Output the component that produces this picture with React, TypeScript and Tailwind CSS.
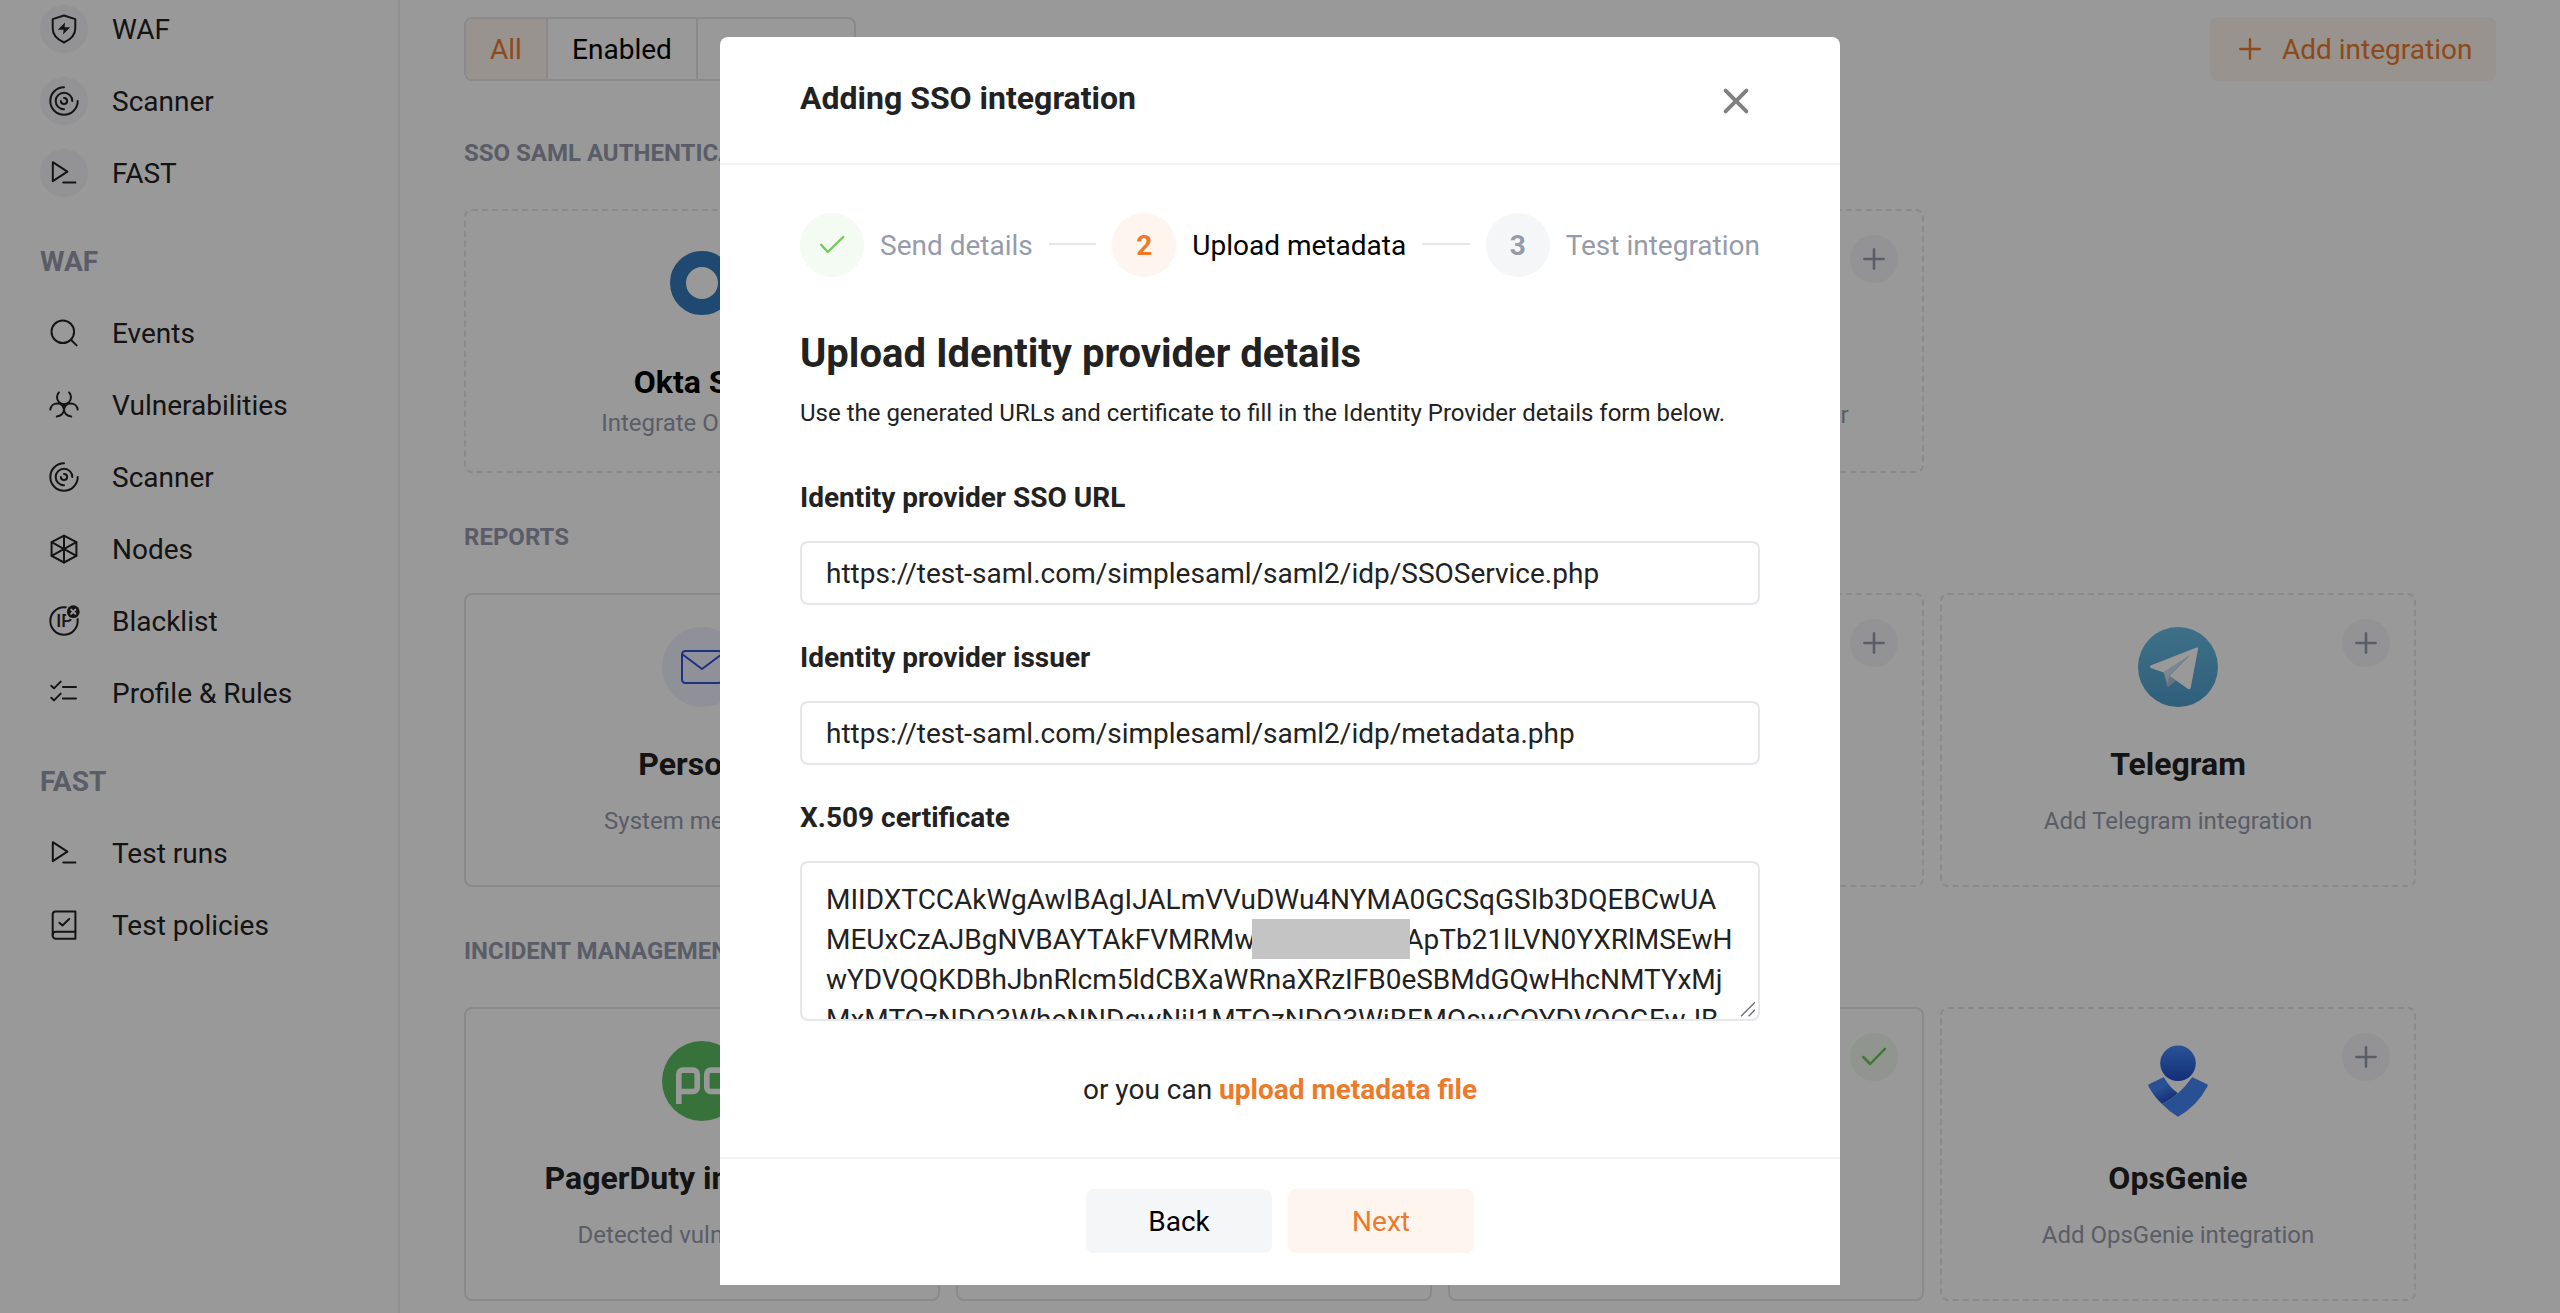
import type { ReactNode } from "react";

type NavIconName = "shield" | "scanner" | "run" | "search" | "bio" | "nodes" | "ip" | "rules" | "policy";

function NavIcon({ name }: { name: NavIconName }) {
  const drawings: Record<NavIconName, ReactNode> = {
    shield: (
      <>
        <path d="M24 10.5 35.3 14.1V23.6C35.3 30.2 30.6 34.6 24 37.5 17.4 34.6 12.7 30.2 12.7 23.6V14.1Z" />
        <path d="M25 17.5 17.8 24.8H23.6L23 29.6 30.2 22.3H24.6Z" fill="currentColor" stroke="none" />
      </>
    ),
    scanner: (
      <>
        <path d="M24 10.3A13.7 13.7 0 1 0 37.7 24" />
        <path d="M24 32.3A8.3 8.3 0 1 1 32.3 24" />
        <path d="M24 20.9A3.1 3.1 0 1 1 20.9 24" />
      </>
    ),
    run: (
      <>
        <path d="M12.8 13.2V32.2L27.4 22.7Z" />
        <path d="M23.3 33.5H35.4" />
      </>
    ),
    search: (
      <>
        <circle cx="22.8" cy="22.8" r="11.3" />
        <path d="M31.2 31 36.6 36.4" />
      </>
    ),
    bio: (
      <>
        <path d="M18.9 11.4A7 7 0 1 0 29.1 11.4" />
        <path d="M10.3 28.6A6.9 6.9 0 0 1 24 28.6C24 32 21 35.4 16.8 35.4" />
        <path d="M37.7 28.6A6.9 6.9 0 0 0 24 28.6C24 32 27 35.4 31.2 35.4" />
        <path d="M22 23.6H26L24 26.8Z" fill="currentColor" />
      </>
    ),
    nodes: (
      <>
        <path d="M24 10.7 36.4 17.2V30.8L24 37.5 11.6 30.8V17.2Z" />
        <path d="M24 10.7V37.5M11.6 17.2 36.4 30.8M36.4 17.2 11.6 30.8" />
      </>
    ),
    ip: (
      <>
        <circle cx="24" cy="24" r="13.7" />
        <text x="16.2" y="30.4" fontSize="17.5" fontWeight="500" fill="currentColor" stroke="none">
          IP
        </text>
        <circle cx="33.3" cy="14.7" r="8" fill="white" stroke="none" />
        <circle cx="33.3" cy="14.7" r="6.4" fill="currentColor" stroke="none" />
        <path d="M31.2 12.6 35.4 16.8M35.4 12.6 31.2 16.8" stroke="white" strokeWidth="2" />
      </>
    ),
    rules: (
      <>
        <path d="M11.3 16.8 14 19.4 20.7 12.6M11.3 28.8 14 31.4 20.7 24.6" />
        <path d="M22.9 18H36M22.9 29.4H36" />
      </>
    ),
    policy: (
      <>
        <path d="M35.4 10.5H15.7A3 3 0 0 0 12.7 13.5V34.7A3 3 0 0 0 15.7 37.7H35.4Z" />
        <path d="M12.7 33.8A3 3 0 0 1 15.7 30.8H35.4" />
        <path d="M19.4 21.7 22.4 24.4 29.2 18" />
      </>
    ),
  };
  return (
    <svg viewBox="0 0 48 48" className="size-12" fill="none" stroke="currentColor" strokeWidth="2" strokeLinecap="round" strokeLinejoin="round">
      {drawings[name]}
    </svg>
  );
}

function NavItem({ icon, label, round }: { icon: NavIconName; label: string; round?: boolean }) {
  return (
    <a className="flex h-12 items-center gap-6">
      <span className={round ? "size-12 rounded-full bg-[#f5f6f8]" : "size-12"}>
        <NavIcon name={icon} />
      </span>
      <span className="pt-0.5 leading-10">{label}</span>
    </a>
  );
}

function NavHeading({ children }: { children: ReactNode }) {
  return <h3 className="mt-[21px] mb-[3px] h-10 font-bold leading-10 text-[#969bac]">{children}</h3>;
}

function Sidebar() {
  return (
    <aside className="flex w-[400px] shrink-0 flex-col gap-6 border-r-2 border-[#f1f1f4] pt-[5px] pl-10 text-[28px] text-[#222]">
      <NavItem icon="shield" label="WAF" round />
      <NavItem icon="scanner" label="Scanner" round />
      <NavItem icon="run" label="FAST" round />
      <NavHeading>WAF</NavHeading>
      <NavItem icon="search" label="Events" />
      <NavItem icon="bio" label="Vulnerabilities" />
      <NavItem icon="scanner" label="Scanner" />
      <NavItem icon="nodes" label="Nodes" />
      <NavItem icon="ip" label="Blacklist" />
      <NavItem icon="rules" label="Profile & Rules" />
      <NavHeading>FAST</NavHeading>
      <NavItem icon="run" label="Test runs" />
      <NavItem icon="policy" label="Test policies" />
    </aside>
  );
}

function Badge({ kind }: { kind: "plus" | "check" }) {
  return kind === "plus" ? (
    <span className="absolute top-6 right-6 size-12 rounded-full bg-[#f5f6f8] text-[#969bac]">
      <svg viewBox="0 0 48 48" className="size-12" fill="none" stroke="currentColor" strokeWidth="2.6" strokeLinecap="round">
        <path d="M24 14.4V33.6M14.4 24H33.6" />
      </svg>
    </span>
  ) : (
    <span className="absolute top-6 right-6 size-12 rounded-full bg-[#f0faee] text-[#6cc756]">
      <svg viewBox="0 0 48 48" className="size-12" fill="none" stroke="currentColor" strokeWidth="2.5" strokeLinecap="round" strokeLinejoin="round">
        <path d="M13.2 24 20.2 31 34.9 15.8" />
      </svg>
    </span>
  );
}

function OktaLogo() {
  return (
    <svg viewBox="0 0 80 80" className="size-20">
      <circle cx="40" cy="40" r="24" fill="none" stroke="#367bbc" strokeWidth="16" />
    </svg>
  );
}

function MailLogo() {
  return (
    <svg viewBox="0 0 80 80" className="size-20">
      <circle cx="40" cy="40" r="40" fill="#eef0fe" />
      <g fill="none" stroke="#3350da" strokeWidth="2" strokeLinejoin="round">
        <rect x="20" y="24" width="40" height="32" rx="3.5" />
        <path d="M20.6 27.5 40 42 59.4 27.5" />
      </g>
    </svg>
  );
}

function PagerDutyLogo() {
  return (
    <svg viewBox="0 0 80 80" className="size-20">
      <circle cx="40" cy="40" r="40" fill="#5dbf61" />
      <g fill="none" stroke="white" strokeWidth="5.6">
        <path d="M16.8 63V33.1a4 4 0 0 1 4-4H31.2a4 4 0 0 1 4 4V46.5a4 4 0 0 1-4 4H16.8" />
        <path d="M63.2 17V46.5a4 4 0 0 1-4 4H48.8a4 4 0 0 1-4-4V33.1a4 4 0 0 1 4-4H63.2" />
      </g>
    </svg>
  );
}

function TelegramLogo() {
  return (
    <svg viewBox="0 0 80 80" className="size-20">
      <defs>
        <linearGradient id="telegram-sky" x1="0" y1="0" x2="0" y2="1">
          <stop offset="0" stopColor="#69bbe3" />
          <stop offset="1" stopColor="#4f9fcd" />
        </linearGradient>
      </defs>
      <circle cx="40" cy="40" r="40" fill="url(#telegram-sky)" />
      <path d="M25.6 45.2 29.2 59.2Q29.8 60.6 31 59.6L38 53.4 31.5 48Z" fill="#afc0d2" />
      <path d="M12.6 38.6 58.6 20.5Q60.4 20.2 60 22.2L52.6 61.2Q51.9 63 50.2 61.9L31.4 48.8 51.6 28.4 25.6 45.4 12.8 40.9Q11 39.6 12.6 38.6Z" fill="white" />
      <path d="M25.6 45.2 51.8 28.6 31.4 48.6 29.8 57Z" fill="#d3dfea" />
    </svg>
  );
}

function OpsGenieLogo() {
  return (
    <svg viewBox="0 0 80 80" className="size-20">
      <defs>
        <linearGradient id="genie-head" x1="0" y1="0" x2="0" y2="1">
          <stop offset="0" stopColor="#478bfb" />
          <stop offset="1" stopColor="#1f4dc6" />
        </linearGradient>
        <linearGradient id="genie-strap" x1="0.25" y1="0.2" x2="0.65" y2="0.9">
          <stop offset="0.3" stopColor="#4486f6" />
          <stop offset="1" stopColor="#2252c8" />
        </linearGradient>
      </defs>
      <circle cx="40" cy="22.3" r="17.8" fill="url(#genie-head)" />
      <path d="M25 36.4 10.9 43.3Q9.8 44 10.4 45.2 16 55.5 24 63 33 58.8 40 52.3 31.8 46.5 26.4 37Q25.8 36 25 36.4Z" fill="url(#genie-strap)" />
      <path d="M55 36.4 69.1 43.3Q70.2 44 69.6 45.2 59 65 40 75.8 30.5 70 24 63 40.8 55 53.6 37 54.2 36 55 36.4Z" fill="#4486f6" />
    </svg>
  );
}

type CardProps = {
  logo?: ReactNode;
  title?: string;
  note?: string;
  badge?: "plus" | "check";
  dashed?: boolean;
};

/* Wide-spaced card used by the reports and incident sections. */
function Card({ logo, title, note, badge, dashed }: CardProps) {
  return (
    <article className={`relative flex h-[294px] flex-col items-center rounded-lg border-2 border-[#e6e6ea] pt-8 ${dashed ? "border-dashed" : ""}`}>
      {logo}
      <h4 className="mt-[37px] text-[32px] font-bold leading-10 whitespace-nowrap text-[#222]">{title}</h4>
      <p className="mt-[21px] text-2xl leading-8 whitespace-nowrap text-[#969bac]">{note}</p>
      {badge && <Badge kind={badge} />}
    </article>
  );
}

/* Shorter card used by the sign-on section. */
function SsoCard({ logo, title, note, badge }: CardProps) {
  return (
    <article className="relative flex h-[264px] flex-col items-center rounded-lg border-2 border-dashed border-[#e6e6ea] pt-8">
      {logo}
      {title && <h4 className="mt-[39px] mb-[5px] text-[32px] font-bold leading-10 text-black">{title}</h4>}
      <p className={`text-2xl leading-8 whitespace-nowrap text-[#969bac] ${title ? "" : "mt-[156px] pl-1.5"}`}>{note}</p>
      {badge && <Badge kind={badge} />}
    </article>
  );
}

function SectionHeading({ children }: { children: ReactNode }) {
  return <h2 className="mb-10 text-2xl font-bold leading-8 text-[#969bac]">{children}</h2>;
}

function Integrations() {
  return (
    <main className="flex grow flex-col pt-[17px] pr-16 pl-16">
      <div className="mb-14 flex h-16 items-center justify-between text-[28px]">
        <div className="flex h-16 w-[392px] divide-x-2 divide-[#e6e6ea] overflow-hidden rounded-lg border-2 border-[#e6e6ea] leading-10">
          <button className="w-[82px] shrink-0 bg-[#fef5ef] pt-0.5 text-[#ed7a2b]">All</button>
          <button className="w-[150px] shrink-0 pt-0.5">Enabled</button>
          <button className="grow pt-0.5">Disabled</button>
        </div>
        <button className="flex h-16 w-[286px] items-center rounded-lg bg-[#fef5ef] pl-7 text-[#ed7a2b]">
          <svg viewBox="0 0 24 24" className="mr-5 size-6" fill="none" stroke="currentColor" strokeWidth="2.4" strokeLinecap="round">
            <path d="M12 2.2V21.8M2.2 12H21.8" />
          </svg>
          <span className="pt-0.5 leading-10">Add integration</span>
        </button>
      </div>
      <div className="flex w-[1952px] flex-col gap-12">
        <section>
          <SectionHeading>SSO SAML AUTHENTICATION</SectionHeading>
          <div className="grid grid-cols-4 gap-4">
            <SsoCard logo={<OktaLogo />} title="Okta SSO" note="Integrate Okta SSO" />
            <SsoCard />
            <SsoCard note="Integrate other SAML provider" badge="plus" />
          </div>
        </section>
        <section>
          <SectionHeading>REPORTS</SectionHeading>
          <div className="grid grid-cols-4 gap-4">
            <Card logo={<MailLogo />} title="Personal" note="System messages" />
            <Card />
            <Card dashed badge="plus" />
            <Card logo={<TelegramLogo />} title="Telegram" note="Add Telegram integration" dashed badge="plus" />
          </div>
        </section>
        <section>
          <SectionHeading>INCIDENT MANAGEMENT</SectionHeading>
          <div className="grid grid-cols-4 gap-4">
            <Card logo={<PagerDutyLogo />} title="PagerDuty integration" note="Detected vulnerabilities" />
            <Card />
            <Card badge="check" />
            <Card logo={<OpsGenieLogo />} title="OpsGenie" note="Add OpsGenie integration" dashed badge="plus" />
          </div>
        </section>
      </div>
    </main>
  );
}

function Stepper() {
  return (
    <ol className="flex h-16 items-center gap-4 text-[28px] leading-10 whitespace-nowrap text-[#969bac]">
      <li className="size-16 shrink-0 rounded-full bg-[#f4fbf3] text-[#71c85c]">
        <svg viewBox="0 0 64 64" className="size-16" fill="none" stroke="currentColor" strokeWidth="2.3" strokeLinecap="round" strokeLinejoin="round">
          <path d="M21.2 31.8 27.8 39 43.2 24" />
        </svg>
      </li>
      <li className="pt-0.5">Send details</li>
      <li className="mb-0.5 h-0.5 grow bg-[#e6e7ea]" />
      <li className="flex size-16 shrink-0 items-center justify-center rounded-full bg-[#fef5ef] pt-0.5 font-bold text-[#ed7a2b]">2</li>
      <li className="pt-0.5 text-black">Upload metadata</li>
      <li className="mb-0.5 h-0.5 grow bg-[#e6e7ea]" />
      <li className="flex size-16 shrink-0 items-center justify-center rounded-full bg-[#f5f6f8] pt-0.5 font-bold">3</li>
      <li className="pt-0.5">Test integration</li>
    </ol>
  );
}

function Field({ label, children }: { label: string; children: ReactNode }) {
  return (
    <div className="flex flex-col gap-[23px]">
      <label className="pt-px font-bold leading-10">{label}</label>
      {children}
    </div>
  );
}

function TextBox({ value }: { value: string }) {
  return <div className="h-16 rounded-lg border-2 border-[#e6e7ea] px-6 pt-[11px] leading-10">{value}</div>;
}

function Modal() {
  return (
    <div className="fixed inset-0 flex items-start justify-center bg-black/40 pt-[37px]">
      <div className="w-[1120px] rounded-t-lg bg-white text-[28px] text-[#222]">
        <header className="flex h-32 items-start justify-between border-b-2 border-[#f2f2f4] pt-[37px] pr-20 pl-20">
          <h1 className="text-[32px] font-bold leading-[48px]">Adding SSO integration</h1>
          <svg viewBox="0 0 48 48" className="mt-[3px] size-12" fill="none" stroke="#808080" strokeWidth="3.9" strokeLinecap="round">
            <path d="M13.6 13.6 34.4 34.4M34.4 13.6 13.6 34.4" />
          </svg>
        </header>
        <div className="px-20 pt-12 pb-[47px]">
          <Stepper />
          <h2 className="mt-[49px] text-[40px] font-bold leading-[56px]">Upload Identity provider details</h2>
          <p className="mt-[11px] text-2xl leading-10">
            Use the generated URLs and certificate to fill in the Identity Provider details form below.
          </p>
          <div className="mt-11 flex flex-col gap-8">
            <Field label="Identity provider SSO URL">
              <TextBox value="https://test-saml.com/simplesaml/saml2/idp/SSOService.php" />
            </Field>
            <Field label="Identity provider issuer">
              <TextBox value="https://test-saml.com/simplesaml/saml2/idp/metadata.php" />
            </Field>
            <Field label="X.509 certificate">
              <div className="relative h-40 overflow-hidden rounded-lg border-2 border-[#e6e7ea] px-6 pt-[17px] leading-10 whitespace-nowrap">
                <div>MIIDXTCCAkWgAwIBAgIJALmVVuDWu4NYMA0GCSqGSIb3DQEBCwUA</div>
                <div className="flex">
                  MEUxCzAJBgNVBAYTAkFVMRMw
                  <span className="relative -mt-px -mr-[5px] -ml-[3px] h-10 w-[158px] shrink-0 bg-[#c4c4c4]" />
                  ApTb21lLVN0YXRlMSEwH
                </div>
                <div>wYDVQQKDBhJbnRlcm5ldCBXaWRnaXRzIFB0eSBMdGQwHhcNMTYxMj</div>
                <div>MxMTQzNDQ3WhcNNDgwNjI1MTQzNDQ3WjBFMQswCQYDVQQGEwJB</div>
                <svg viewBox="0 0 16 16" className="absolute right-0.5 bottom-0.5 size-4" fill="none" stroke="#6e6e6e" strokeWidth="1.3">
                  <path d="M1 15.2 15 1.2M8.6 15.2 15 8.8" />
                </svg>
              </div>
            </Field>
          </div>
          <p className="mt-[49px] text-center leading-10">
            or you can <a className="font-bold text-[#ed7a2b]">upload metadata file</a>
          </p>
        </div>
        <footer className="flex h-32 justify-center gap-4 border-t-2 border-[#f2f2f4] pt-[30px]">
          <button className="h-16 w-[186px] rounded-lg bg-[#f5f6f8] pt-0.5 text-black">Back</button>
          <button className="h-16 w-[186px] rounded-lg bg-[#fef5ef] pt-0.5 text-[#ed7a2b]">Next</button>
        </footer>
      </div>
    </div>
  );
}

export default function App() {
  return (
    <div className="relative flex h-screen overflow-hidden bg-white font-['Roboto',sans-serif] text-black">
      <Sidebar />
      <Integrations />
      <Modal />
    </div>
  );
}
